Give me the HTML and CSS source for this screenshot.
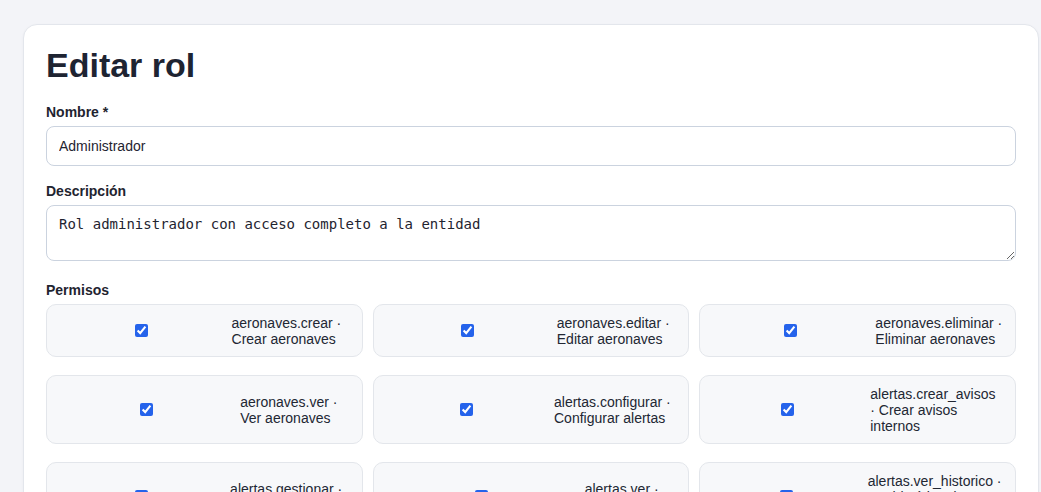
FILE: index.html
```html
<!DOCTYPE html>
<html lang="es">
<head>
<meta charset="utf-8">
<title>Editar rol</title>
<link rel="stylesheet" href="styles.css">
</head>
<body>
<main class="page">
  <form class="card">
    <h1 class="title">Editar rol</h1>

    <div class="field">
      <label class="field-label" for="nombre">Nombre *</label>
      <input class="input" id="nombre" type="text" value="Administrador">
    </div>

    <div class="field field-area">
      <label class="field-label" for="desc">Descripción</label>
      <textarea class="textarea" id="desc">Rol administrador con acceso completo a la entidad</textarea>
    </div>

    <div class="field">
      <span class="field-label">Permisos</span>
      <div class="perm-grid">
        <label class="perm"><span class="perm-box"><input type="checkbox" checked></span><span class="perm-text">aeronaves.crear · Crear aeronaves</span></label>
        <label class="perm"><span class="perm-box"><input type="checkbox" checked></span><span class="perm-text">aeronaves.editar · Editar aeronaves</span></label>
        <label class="perm"><span class="perm-box"><input type="checkbox" checked></span><span class="perm-text">aeronaves.eliminar · Eliminar aeronaves</span></label>
        <label class="perm"><span class="perm-box"><input type="checkbox" checked></span><span class="perm-text">aeronaves.ver · Ver aeronaves</span></label>
        <label class="perm"><span class="perm-box"><input type="checkbox" checked></span><span class="perm-text">alertas.configurar · Configurar alertas</span></label>
        <label class="perm"><span class="perm-box"><input type="checkbox" checked></span><span class="perm-text">alertas.crear_avisos · Crear avisos internos</span></label>
        <label class="perm"><span class="perm-box"><input type="checkbox" checked></span><span class="perm-text">alertas.gestionar · Gestionar alertas</span></label>
        <label class="perm"><span class="perm-box"><input type="checkbox" checked></span><span class="perm-text">alertas.ver · Ver alertas</span></label>
        <label class="perm"><span class="perm-box"><input type="checkbox" checked></span><span class="perm-text">alertas.ver_historico · Ver histórico de alertas</span></label>
        <label class="perm"><span class="perm-box"><input type="checkbox" checked></span><span class="perm-text">usuarios.crear · Crear usuarios</span></label>
        <label class="perm"><span class="perm-box"><input type="checkbox" checked></span><span class="perm-text">usuarios.editar · Editar usuarios</span></label>
        <label class="perm"><span class="perm-box"><input type="checkbox" checked></span><span class="perm-text">usuarios.ver · Ver usuarios</span></label>
      </div>
    </div>
  </form>
</main>
</body>
</html>
```

FILE: styles.css
```css
html, body {
  margin: 0;
  padding: 0;
}

body {
  background: #f3f4f8;
  font-family: "Liberation Sans", Arial, Helvetica, sans-serif;
  color: #1f2430;
}

.page {
  padding: 24px 2px 24px 23px;
}

.card {
  background: #ffffff;
  border: 1px solid #e3e6ec;
  border-radius: 14px;
  padding: 22px;
  box-shadow: 0 1px 3px rgba(20, 30, 60, 0.04);
}

.title {
  margin: 0 0 20px;
  font-size: 34px;
  line-height: 1.1;
  font-weight: 700;
  color: #1e2432;
}

.field {
  margin-bottom: 17px;
}

.field-area {
  margin-bottom: 21px;
}

.field-label {
  display: block;
  font-size: 14px;
  font-weight: 700;
  color: #1f2430;
  margin-bottom: 6px;
}

.input {
  display: block;
  width: 100%;
  box-sizing: border-box;
  height: 40px;
  padding: 0 12px;
  border: 1px solid #cbd3df;
  border-radius: 8px;
  background: #fff;
  font-family: "Liberation Sans", Arial, sans-serif;
  font-size: 14px;
  color: #1f2430;
}

.textarea {
  display: block;
  width: 100%;
  box-sizing: border-box;
  height: 56px;
  padding: 10px 12px;
  border: 1px solid #cbd3df;
  border-radius: 8px;
  background: #fff;
  font-family: "DejaVu Sans Mono", monospace;
  font-size: 14px;
  color: #1f2430;
}

.perm-grid {
  display: grid;
  grid-template-columns: repeat(3, 1fr);
  column-gap: 10px;
  row-gap: 18px;
}

.perm {
  display: flex;
  align-items: center;
  gap: 8px;
  padding: 9.5px 12px;
  border: 1px solid #e3e6eb;
  border-radius: 10px;
  background: #f7f8fa;
  font-size: 14px;
  line-height: 16px;
  color: #222733;
}

.perm-box {
  flex: 1 1 100%;
  display: flex;
  justify-content: center;
  margin: 3px 3px 3px 4px;
}

.perm-box input {
  margin: 0;
  width: 13px;
  height: 13px;
  accent-color: #2563eb;
}

.perm-text {
  flex: 0 1 auto;
}
```
